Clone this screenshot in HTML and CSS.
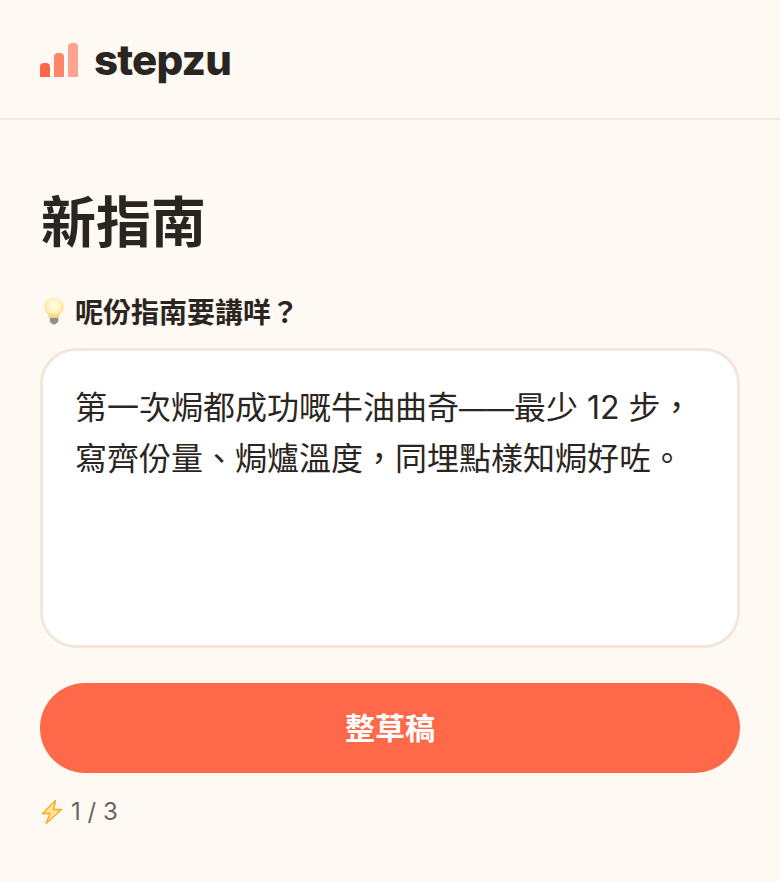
FILE: index.html
```html
<!DOCTYPE html>
<html lang="zh-Hant">
<head>
    <meta charset="UTF-8">
    <meta name="viewport" content="width=device-width, initial-scale=1.0">
    <title>stepzu</title>
    <link rel="stylesheet" href="styles.css">
</head>
<body>

    <!-- Header -->
    <header class="topbar">
        <svg class="logo-mark" width="38" height="34" viewBox="0 0 38 34">
            <path d="M0 34V24a4 4 0 0 1 4-4h2a4 4 0 0 1 4 4v10z" fill="#ff6647"/>
            <path d="M14 34V14a4 4 0 0 1 4-4h2a4 4 0 0 1 4 4v20z" fill="#ff8469"/>
            <path d="M28 34V4a4 4 0 0 1 4-4h2a4 4 0 0 1 4 4v30z" fill="#ffa391"/>
        </svg>
        <span class="logo-text">stepzu</span>
    </header>

    <main class="content">
        <h1 class="title">新指南</h1>

        <div class="field-label">
            <svg class="bulb" width="20" height="28" viewBox="0 0 20 28">
                <defs>
                    <radialGradient id="glass" cx="50%" cy="40%" r="60%">
                        <stop offset="0" stop-color="#fffef0"/>
                        <stop offset="0.6" stop-color="#fff3bd"/>
                        <stop offset="1" stop-color="#f8d264"/>
                    </radialGradient>
                </defs>
                <path d="M10 .5C4.500.5.500 4.600.500 9.800c0 3.300 1.700 5.300 3.300 7.400.9 1.200 1.400 2.200 1.500 3.300h9.400c.1-1.100.6-2.100 1.500-3.300 1.600-2.100 3.300-4.100 3.300-7.400C19.500 4.600 15.500.5 10 .5z" fill="url(#glass)"/>
                <path d="M5.800 20.800h8.400v3.400c0 .8-.5 1.300-1.300 1.400-.3 1.300-1.400 2-2.900 2s-2.600-.7-2.900-2c-.8-.1-1.300-.6-1.300-1.400z" fill="#8f8f8c"/>
            </svg>
            <span>呢份指南要講咩？</span>
        </div>

        <div class="prompt-box">第一次焗都成功嘅牛油曲奇<span class="dash">——</span>最少 12 步，寫齊份量、焗爐溫度，同埋點樣知焗好咗。</div>

        <button class="submit-btn">整草稿</button>

        <div class="quota">
            <svg class="bolt" width="22" height="26" viewBox="0 0 22 26">
                <path d="M14.500 1.500 1.500 14.500h7.500L5 24.500 20.500 10.500h-8z" fill="#ffe98f" stroke="#f8a91f" stroke-width="1.300" stroke-linejoin="round"/>
            </svg>
            <span>1 / 3</span>
        </div>
    </main>

</body>
</html>
```

FILE: styles.css
```css
body {
    margin: 0;
    background-color: #fff9f3;
    color: #2b2522;
    font-family: Inter, "Noto Sans CJK TC", sans-serif;
}

/* Header */
.topbar {
    display: flex;
    align-items: center;
    gap: 16px;
    height: 118px;
    padding: 0 40px;
    border-bottom: 2px solid #f3e8df;
}
.logo-mark {
    margin-top: 2px;
}
.logo-text {
    font-size: 42px;
    font-weight: 800;
    letter-spacing: -0.8px;
}

/* Form */
.content {
    display: flex;
    flex-direction: column;
    padding: 0 40px;
}
.title {
    margin: 66px 0 0 1px;
    font-size: 55px;
    line-height: 72px;
    font-weight: 700;
}
.field-label {
    display: flex;
    align-items: center;
    gap: 11px;
    margin-top: 37px;
    height: 36px;
    font-size: 28px;
    font-weight: 600;
    line-height: 36px;
}
.bulb {
    flex: none;
    margin-left: 4px;
    margin-bottom: 4px;
}
.prompt-box {
    box-sizing: border-box;
    height: 300px;
    margin-top: 17px;
    padding: 32px 24px 32px 32px;
    background-color: #fff;
    border: 3px solid #f3e6dc;
    border-radius: 36px;
    font-size: 32px;
    line-height: 50px;
}
.dash {
    font-size: 27.5px;
}
.submit-btn {
    height: 90px;
    margin-top: 35px;
    padding: 0 0 5px;
    border: none;
    border-radius: 45px;
    background-color: #ff6849;
    color: #fff;
    font-family: inherit;
    font-size: 30px;
    font-weight: 700;
}
.quota {
    display: flex;
    align-items: center;
    gap: 8px;
    margin-top: 24px;
    font-size: 24px;
    line-height: 30px;
    color: #6b625c;
}
.bolt {
    margin-left: 1px;
    flex: none;
}
```
